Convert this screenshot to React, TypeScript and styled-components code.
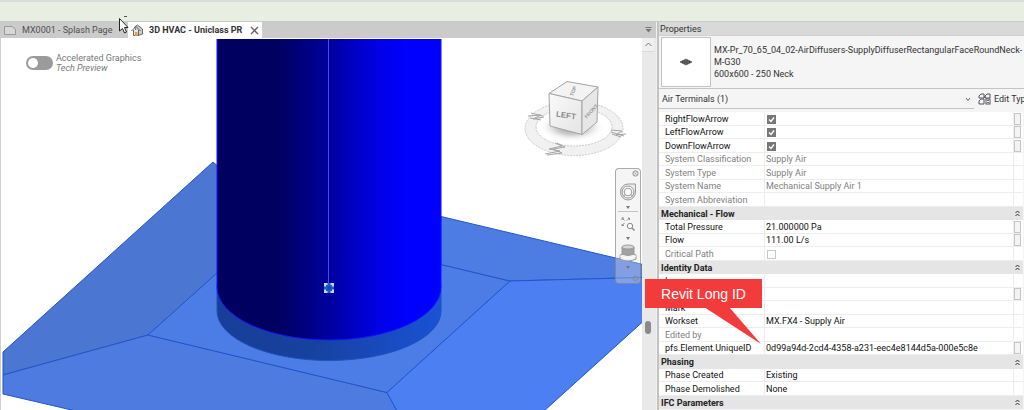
import React from "react";
import styled, { createGlobalStyle } from "styled-components";

const GlobalStyle = createGlobalStyle`
  * { box-sizing: border-box; }
  body {
    margin: 0;
    background: #fff;
    font-family: Roboto, "Open Sans", sans-serif;
    font-size: 9px;
    color: #111;
  }
  button, input, select { font: inherit; color: inherit; margin: 0; }
  button { padding: 0; border: 0; background: none; cursor: pointer; }
  svg { flex: none; }
`;

const Window = styled.div`
  display: flex;
  flex-direction: column;
  height: 100vh;
  min-height: 400px;
  overflow: hidden;
`;

const OptionsBar = styled.header`
  flex: none;
  height: 22px;
  background: #e9eee2;
  border-top: 2px solid #dbdcdd;
  border-bottom: 1px solid #c9cbc6;
`;

const Workspace = styled.main`
  flex: 1;
  min-height: 0;
  display: grid;
  grid-template-columns: minmax(0, 1fr) 367px;
`;

const DocumentArea = styled.section`
  display: flex;
  flex-direction: column;
  min-width: 0;
  min-height: 0;
  border-right: 1px solid #f0f0f0;
`;

const TabBar = styled.nav`
  flex: none;
  display: flex;
  height: 16px;
  background: #cbcbcb;
`;

const Tab = styled.div<{ $active?: boolean }>`
  display: flex;
  align-items: center;
  gap: 5px;
  padding: 0 3px;
  width: ${(p) => (p.$active ? 134 : 128)}px;
  height: 16px;
  white-space: nowrap;
  background: ${(p) => (p.$active ? "#fff" : "transparent")};
  color: ${(p) => (p.$active ? "#333" : "#505050")};
  font-weight: ${(p) => (p.$active ? 700 : 400)};
`;

const TabLabel = styled.button`
  flex: 1;
  line-height: 14px;
  text-align: left;
`;

const IconButton = styled.button`
  display: flex;
  align-items: center;
  justify-content: center;
`;

const TabMenu = styled(IconButton)`
  margin-left: auto;
  width: 16px;
`;

const ViewRow = styled.div`
  flex: 1;
  display: flex;
  min-height: 0;
`;

const Canvas = styled.div`
  position: relative;
  flex: 1;
  min-width: 0;
  background: #fff;
  overflow: hidden;
  border-left: 1px solid #cfcfcf;
`;

const Model = styled.svg`
  display: block;
  width: 100%;
  height: 100%;
`;

const GraphicsToggle = styled.label`
  position: absolute;
  left: 25px;
  top: 15px;
  display: flex;
  align-items: center;
  gap: 3px;
  color: #777;
  line-height: 10px;
`;

const Switch = styled.input`
  appearance: none;
  width: 27px;
  height: 14px;
  border-radius: 7px;
  background: #9b9b9b;
  &::before {
    content: "";
    display: block;
    width: 10px;
    height: 10px;
    margin: 2px;
    border-radius: 5px;
    background: #fff;
  }
`;

const ToggleText = styled.span`
  display: flex;
  flex-direction: column;
`;

const ViewCube = styled.svg`
  position: absolute;
  right: 14px;
  top: 38px;
`;

const NavBar = styled.div`
  position: absolute;
  right: 1px;
  top: 130px;
  width: 26px;
  height: 116px;
  display: flex;
  flex-direction: column;
  align-items: center;
  border: 1px solid rgba(120, 120, 120, 0.6);
  border-radius: 4px;
  background: rgba(225, 225, 225, 0.35);
`;

const NavButton = styled(IconButton)<{ $h: number }>`
  flex: none;
  width: 22px;
  height: ${(p) => p.$h}px;
`;

const NavDot = styled(IconButton)`
  flex: none;
  align-self: flex-end;
  width: 9px;
  height: 9px;
`;

const NavFootDot = styled(NavDot)`
  margin-top: auto;
`;

const NavRule = styled.hr`
  width: 20px;
  margin: 1px 0 0;
  border: 0;
  border-top: 1px solid #c4c4c4;
`;

const ScrollBar = styled.div`
  flex: none;
  width: 14px;
  padding-right: 2px;
  display: flex;
  flex-direction: column;
  align-items: center;
  background: #e9e9e9;
`;

const ScrollUp = styled(IconButton)`
  flex: none;
  align-self: stretch;
  height: 14px;
  background: #f0f0f0;
  border-bottom: 1px solid #d8d8d8;
`;

const ScrollGap = styled.div<{ $grow: number }>`
  flex: ${(p) => p.$grow} 0 0;
`;

const ScrollThumb = styled.div`
  flex: none;
  width: 6px;
  height: 13px;
  border-radius: 3px;
  background: #8a8a8a;
`;

const Panel = styled.aside`
  position: relative;
  display: flex;
  flex-direction: column;
  min-height: 0;
  background: #f5f5f5;
  border-left: 2px solid #c2c2c2;
`;

const PanelTitle = styled.h2`
  flex: none;
  margin: 0;
  height: 14px;
  padding-left: 1px;
  background: #d9d9d9;
  border-bottom: 1px solid #cfcfcf;
  font-size: 9px;
  font-weight: 400;
  line-height: 14px;
  color: #333;
`;

const TypeSelector = styled.button`
  flex: none;
  display: flex;
  align-items: center;
  gap: 3px;
  height: 53px;
  padding: 1px 2px;
  border-bottom: 1px solid #c4c4c4;
  text-align: left;
  line-height: 12px;
  color: #333;
`;

const Thumbnail = styled.span`
  flex: none;
  display: flex;
  align-items: center;
  justify-content: center;
  width: 50px;
  height: 50px;
  background: #fff;
  border: 1px solid #c4c4c4;
`;

const TypeName = styled.span`
  display: flex;
  flex-direction: column;
  white-space: nowrap;
`;

const FilterRow = styled.div`
  flex: none;
  display: flex;
  height: 20px;
  margin-bottom: 3px;
  overflow: hidden;
  color: #333;
`;

const FilterField = styled.div`
  position: relative;
  flex: none;
  width: 315px;
  border-bottom: 1px solid #c4c4c4;
  svg {
    position: absolute;
    right: 3px;
    top: 8px;
    pointer-events: none;
  }
`;

const FilterSelect = styled.select`
  appearance: none;
  width: 100%;
  height: 19px;
  padding: 0 3px;
  border: 0;
  background: transparent;
`;

const EditType = styled.button`
  flex: none;
  display: flex;
  align-items: center;
  gap: 3px;
  padding-left: 4px;
  white-space: nowrap;
`;

const TableWrap = styled.div`
  flex: 1;
  min-height: 0;
  overflow: hidden;
  margin-right: 1px;
`;

const Table = styled.table`
  width: 100%;
  table-layout: fixed;
  border-collapse: separate;
  border-spacing: 0;
  background: #fff;
`;

const LabelCol = styled.col`
  width: 106px;
`;

const ButtonCol = styled.col`
  width: 9px;
`;

const Row = styled.tr<{ $muted?: boolean }>`
  height: 14px;
  color: ${(p) => (p.$muted ? "#808080" : "#111")};
  &:nth-child(even) {
    height: 13px;
  }
`;

const cell = `
  padding: 0;
  line-height: 12px;
  font-weight: 400;
  text-align: left;
  vertical-align: middle;
  white-space: nowrap;
  overflow: hidden;
`;

const NameCell = styled.th`
  ${cell}
  padding-left: 6px;
  border-bottom: 1px solid #ededed;
  border-right: 1px solid #ededed;
`;

const ValueCell = styled.td`
  ${cell}
  padding-left: 1px;
  border-bottom: 1px solid #ededed;
  border-right: 1px solid #ededed;
`;

const ButtonCell = styled.td`
  ${cell}
  border-bottom: 1px solid #ededed;
`;

const GroupCell = styled.th`
  ${cell}
  padding-left: 2px;
  background: #e5e5e5;
  color: #222;
  font-weight: 700;
`;

const GroupToggleCell = styled.td`
  ${cell}
  background: #e5e5e5;
`;

const GroupToggle = styled(IconButton)`
  width: 6px;
  height: 8px;
`;

const RowButton = styled.button`
  display: block;
  width: 7px;
  height: 12px;
  border: 1px solid #c6c6c6;
  background: #f3f3f3;
`;

const Check = styled.input`
  appearance: none;
  display: block;
  width: 9px;
  height: 9px;
  margin: 1px 0 0 1px;
  border: 1px solid #c8c8c8;
  background: #fff;
  &:checked {
    border-color: #777;
    background: #777;
  }
`;

const CheckBox = styled.span`
  display: grid;
  width: 10px;
  > * { grid-area: 1 / 1; }
  svg { pointer-events: none; margin: 1px 0 0 1px; z-index: 1; }
`;

const Callout = styled.div`
  position: absolute;
  left: -14px;
  top: 257px;
  width: 117px;
  height: 29px;
  display: flex;
  align-items: center;
  justify-content: center;
  background: #f43b3b;
  color: #fff;
  font-family: "Liberation Sans", Arial, sans-serif;
  font-size: 14px;
`;

const CalloutTail = styled.svg`
  position: absolute;
  left: 59px;
  top: 28px;
`;

const Cursor = styled.svg`
  position: absolute;
  left: 117px;
  top: 15px;
`;

type Prop = {
  name: string;
  value?: string;
  muted?: boolean;
  checked?: boolean;
  button?: boolean;
};
type Entry = Prop | { group: string };

const entries: Entry[] = [
  { name: "RightFlowArrow", checked: true, button: true },
  { name: "LeftFlowArrow", checked: true, button: true },
  { name: "DownFlowArrow", checked: true, button: true },
  { name: "System Classification", value: "Supply Air", muted: true },
  { name: "System Type", value: "Supply Air", muted: true },
  { name: "System Name", value: "Mechanical Supply Air 1", muted: true },
  { name: "System Abbreviation", muted: true },
  { group: "Mechanical - Flow" },
  { name: "Total Pressure", value: "21.000000 Pa", button: true },
  { name: "Flow", value: "111.00 L/s", button: true },
  { name: "Critical Path", checked: false, muted: true },
  { group: "Identity Data" },
  { name: "Image" },
  { name: "Comments", button: true },
  { name: "Mark" },
  { name: "Workset", value: "MX.FX4 - Supply Air" },
  { name: "Edited by", muted: true },
  { name: "pfs.Element.UniqueID", value: "0d99a94d-2cd4-4358-a231-eec4e8144d5a-000e5c8e", button: true },
  { group: "Phasing" },
  { name: "Phase Created", value: "Existing" },
  { name: "Phase Demolished", value: "None" },
  { group: "IFC Parameters" },
];

function DuctModel() {
  return (
    <Model viewBox="1 38 641 372" preserveAspectRatio="xMidYMin slice" role="img" aria-label="3D view of an air diffuser">
      <defs>
        <linearGradient id="duct">
          <stop offset="0" stopColor="#000060" />
          <stop offset="0.27" stopColor="#000060" />
          <stop offset="0.4" stopColor="#000082" />
          <stop offset="0.5" stopColor="#00009e" />
          <stop offset="0.62" stopColor="#0000c6" />
          <stop offset="0.75" stopColor="#0000ec" />
          <stop offset="0.85" stopColor="#0000ff" />
        </linearGradient>
        <linearGradient id="collar">
          <stop offset="0" stopColor="#173f98" />
          <stop offset="0.4" stopColor="#17419e" />
          <stop offset="1" stopColor="#1a52d6" />
        </linearGradient>
      </defs>
      <g stroke="#2355cb" strokeWidth="1" strokeLinejoin="round">
        <path d="M3 352 213 162 220 168V271L148 335 3 375Z" fill="#4b76d2" />
        <path d="M3 375 148 335 387 392.500 397 411H76L3 394Z" fill="#4d7be0" />
        <path d="M148 335 218 272 441 264.500 510 281 387 392.500Z" fill="#4c7de6" />
        <path d="M441 216.500 643 264.500V277.500L510 281 441 264.500Z" fill="#4d7ce2" />
        <path d="M510 281 643 277.500V321.500L544 411H397L387 392.500Z" fill="#4c80f2" />
      </g>
      <path d="M217 285V311A112 49.500 0 0 0 441 311V285Z" fill="url(#collar)" stroke="#2050bd" />
      <path d="M217 38V287A112 53 0 0 0 441 287V38Z" fill="url(#duct)" />
      <path d="M217 38V287A112 53 0 0 0 441 287V38" fill="none" stroke="#1414ff" />
      <path d="M328.500 38V283" stroke="#4d4de0" />
      <g fill="none">
        <rect x="324" y="283" width="10" height="10" fill="#1c5cc0" />
        <path
          d="M327.500 284H325V286.500M330.500 284H333V286.500M327.500 292H325V289.500M330.500 292H333V289.500"
          stroke="#b9dcf5"
          strokeWidth="2"
        />
        <circle cx="329" cy="288" r="2" fill="#0a4cc0" />
      </g>
      <path d="M0 38H642V39H0Z" fill="#fff" />
    </Model>
  );
}

function CubeDrawing() {
  return (
    <ViewCube width="106" height="84" viewBox="522 76 106 84" aria-label="View cube">
      <defs>
        <linearGradient id="face" x1="0" y1="0" x2="1" y2="1">
          <stop offset="0" stopColor="#fafafa" />
          <stop offset="1" stopColor="#e4e4e4" />
        </linearGradient>
        <radialGradient id="shade">
          <stop offset="0" stopColor="#999" />
          <stop offset="0.5" stopColor="#ccc" />
          <stop offset="1" stopColor="#fff" stopOpacity="0" />
        </radialGradient>
      </defs>
      <path
        d="M525 128.500a49 27 0 1 0 98 0a49 27 0 1 0-98 0ZM536 127a38 19 0 1 0 76 0a38 19 0 1 0-76 0Z"
        fill="#f1f1f1"
        fillRule="evenodd"
        stroke="#cccccc"
        strokeDasharray="2 1"
      />
      <ellipse cx="572" cy="127" rx="33" ry="15" fill="url(#shade)" />
      <g stroke="#a4a4a4" strokeLinejoin="round">
        <path d="M549 93.500 567 81.500 598 87 582 101Z" fill="#f3f3f3" />
        <path d="M549 93.500 582 101V134.500L550 126Z" fill="url(#face)" />
        <path d="M582 101 598 87 597 122 582 134.500Z" fill="#e6e6e6" />
      </g>
      <g fontFamily="Liberation Sans, sans-serif" fill="#999" textAnchor="middle">
        <text x="566" y="118" fontSize="8" fontWeight="700" fill="#8c8c8c" transform="rotate(8 566 115)">LEFT</text>
        <text x="591" y="113" fontSize="5" fontWeight="700" transform="rotate(-48 591 111)">FRONT</text>
        <text x="573" y="93" fontSize="5" fontWeight="700" transform="rotate(-65 573 91)">TOP</text>
      </g>
      <g fill="none" stroke="#a6a6a6" strokeWidth="1" strokeLinejoin="round">
        <path d="M545 154 560 151 549 149 562 146 555 143M547 155 562 153 553 149 565 147 557 143" />
        <path d="M528 116 541 115 533 119 544 117M531 113 543 116M530 118 541 120" />
        <path d="M611 132 624 136M611 130 622 131 616 135 626 134M612 134 621 137" />
      </g>
    </ViewCube>
  );
}

const SmallCircle = () => (
  <svg width="7" height="7" viewBox="0 0 7 7" fill="none" stroke="#8a8a8a">
    <circle cx="3.500" cy="3.500" r="2.600" />
    <path d="M2.500 2.500 4.500 4.500M4.500 2.500 2.500 4.500" strokeWidth="0.800" />
  </svg>
);

const DownArrow = () => (
  <svg width="4" height="3" viewBox="0 0 4 3">
    <path d="M0 0H4L2 3Z" fill="#777" />
  </svg>
);

function Navigation() {
  return (
    <NavBar>
      <NavDot aria-label="Close navigation bar"><SmallCircle /></NavDot>
      <NavButton $h={27} aria-label="Steering wheel">
        <svg width="18" height="18" viewBox="0 0 18 18" fill="none" stroke="#9a9a9a">
          <path d="M9 1H16.500V9A7.500 8 0 1 1 9 1Z" fill="#ececec" />
          <circle cx="9" cy="9" r="6" fill="#fafafa" />
          <circle cx="9" cy="9" r="3.800" />
          <path d="M6 11.500 4.500 13.500M12 11.500 13.500 13.500" />
        </svg>
      </NavButton>
      <NavButton $h={5} aria-label="Wheel options"><DownArrow /></NavButton>
      <NavRule />
      <NavButton $h={24} aria-label="Zoom">
        <svg width="14" height="14" viewBox="0 0 14 14" fill="none" stroke="#8c8c8c">
          <path d="M1 3V1H3M1 1 3.500 3.500M7 1H8.500V3M8.500 1 6 3.500M1 7V8.500H3M1 8.500 3.500 6" strokeWidth="1" />
          <circle cx="9" cy="9" r="2.700" fill="#f8f8f8" />
          <path d="M11 11 13.500 13.500" strokeWidth="1.500" />
        </svg>
      </NavButton>
      <NavButton $h={5} aria-label="Zoom options"><DownArrow /></NavButton>
      <NavButton $h={24} aria-label="3D navigation">
        <svg width="18" height="18" viewBox="0 0 18 18" stroke="#9a9a9a">
          <path d="M1 11Q9 7 17 11V15Q9 19 1 15Z" fill="#f0f0f0" />
          <path d="M3 3V10Q9 13 15 10V3Z" fill="#a2a2a2" />
          <ellipse cx="9" cy="3" rx="6" ry="2" fill="#d6d6d6" />
          <path d="M1 12Q9 16 17 12" fill="none" stroke="#fff" />
        </svg>
      </NavButton>
      <NavButton $h={5} aria-label="3D options"><DownArrow /></NavButton>
      <NavFootDot aria-label="Customize navigation bar"><SmallCircle /></NavFootDot>
    </NavBar>
  );
}

function PropertyRow({ p }: { p: Prop }) {
  return (
    <Row $muted={p.muted}>
      <NameCell scope="row">{p.name}</NameCell>
      <ValueCell>
        {p.checked === undefined ? (
          p.value
        ) : (
          <CheckBox>
            <Check type="checkbox" aria-label={p.name} defaultChecked={p.checked} disabled={p.muted} />
            {p.checked && (
              <svg width="9" height="9" viewBox="0 0 9 9" fill="none" stroke="#fff" strokeWidth="1.300">
                <path d="M2 4.500 4 6.500 7 2.500" />
              </svg>
            )}
          </CheckBox>
        )}
      </ValueCell>
      <ButtonCell>{p.button && <RowButton aria-label={`Associate ${p.name}`} />}</ButtonCell>
    </Row>
  );
}

function PropertiesPanel() {
  return (
    <Panel>
      <PanelTitle>Properties</PanelTitle>
      <TypeSelector>
        <Thumbnail>
          <svg width="14" height="10" viewBox="0 0 14 10">
            <path d="M1 5 7 2 13 5 7 8Z" fill="#333" stroke="#666" strokeWidth="0.800" />
            <path d="M4 5 7 3.500 10 5 7 6.500ZM7 2V8" fill="none" stroke="#888" strokeWidth="0.600" />
          </svg>
        </Thumbnail>
        <TypeName>
          <span>MX-Pr_70_65_04_02-AirDiffusers-SupplyDiffuserRectangularFaceRoundNeck-</span>
          <span>M-G30</span>
          <span>600x600 - 250 Neck</span>
        </TypeName>
      </TypeSelector>
      <FilterRow>
        <FilterField>
          <FilterSelect aria-label="Element filter">
            <option>Air Terminals (1)</option>
          </FilterSelect>
          <svg width="6" height="5" viewBox="0 0 6 5" fill="none" stroke="#666">
            <path d="M1 1 3 3.500 5 1" />
          </svg>
        </FilterField>
        <EditType>
          <svg width="13" height="12" viewBox="0 0 13 12" fill="none" stroke="#555">
            <path d="M1 3 3 1H6V5H1ZM7 3 9 1H12V5H7ZM1 8 3 6H6V11H1ZM7 3V5" />
            <rect x="8" y="6" width="4" height="5" fill="#fff" />
            <path d="M9 7.500H11M9 9.500H11" stroke="#3a76b8" />
          </svg>
          Edit Type
        </EditType>
      </FilterRow>
      <TableWrap>
        <Table>
          <colgroup>
            <LabelCol />
            <col />
            <ButtonCol />
          </colgroup>
          <tbody>
            {entries.map((e) =>
              "group" in e ? (
                <Row key={e.group}>
                  <GroupCell colSpan={2} scope="rowgroup">{e.group}</GroupCell>
                  <GroupToggleCell>
                    <GroupToggle aria-label={`Collapse ${e.group}`}>
                      <svg width="5" height="7" viewBox="0 0 5 7" fill="none" stroke="#333">
                        <path d="M0.500 3 2.500 1 4.500 3M0.500 6 2.500 4 4.500 6" />
                      </svg>
                    </GroupToggle>
                  </GroupToggleCell>
                </Row>
              ) : (
                <PropertyRow key={e.name} p={e} />
              )
            )}
          </tbody>
        </Table>
      </TableWrap>
      <Callout>
        Revit Long ID
        <CalloutTail width="58" height="38" viewBox="0 0 58 38">
          <path d="M0 0H25L57 37Z" fill="#f43b3b" />
        </CalloutTail>
      </Callout>
    </Panel>
  );
}

export default function App() {
  return (
    <Window>
      <GlobalStyle />
      <OptionsBar />
      <Workspace>
        <DocumentArea>
          <TabBar>
            <Tab>
              <svg width="14" height="11" viewBox="0 0 14 11">
                <path d="M1.500 1.500H9L12.500 4.500V9.500H1.500Z" fill="#d8d8d8" stroke="#999" />
              </svg>
              <TabLabel>MX0001 - Splash Page</TabLabel>
            </Tab>
            <Tab $active>
              <svg width="13" height="13" viewBox="0 0 13 13" stroke="#666">
                <path d="M3.500 3 6.500 1 11.500 5V10L7 11.500Z" fill="#ccc" />
                <path d="M2.500 6V11.500H7.500V6" fill="#e8e8e8" />
                <path d="M0.500 7 5 2.500 9.500 7" fill="none" />
                <rect x="4" y="8" width="2.500" height="4" fill="#e0a030" stroke="none" />
              </svg>
              <TabLabel>3D HVAC - Uniclass PR</TabLabel>
              <IconButton aria-label="Close tab">
                <svg width="9" height="9" viewBox="0 0 9 9" stroke="#666" strokeWidth="1.400">
                  <path d="M1 1 8 8M8 1 1 8" />
                </svg>
              </IconButton>
            </Tab>
            <TabMenu aria-label="Open views">
              <svg width="7" height="6" viewBox="0 0 7 6">
                <path d="M0.500 0H6.500V1H0.500ZM0.500 2H6.500L3.500 5.500Z" fill="#777" />
              </svg>
            </TabMenu>
          </TabBar>
          <ViewRow>
            <Canvas>
              <DuctModel />
              <GraphicsToggle>
                <Switch type="checkbox" role="switch" />
                <ToggleText>
                  <span>Accelerated Graphics</span>
                  <em>Tech Preview</em>
                </ToggleText>
              </GraphicsToggle>
              <CubeDrawing />
              <Navigation />
            </Canvas>
            <ScrollBar>
              <ScrollUp aria-label="Scroll up">
                <svg width="7" height="5" viewBox="0 0 7 5" fill="none" stroke="#777">
                  <path d="M0.500 4 3.500 1 6.500 4" />
                </svg>
              </ScrollUp>
              <ScrollGap $grow={270} />
              <ScrollThumb />
              <ScrollGap $grow={76} />
            </ScrollBar>
          </ViewRow>
        </DocumentArea>
        <PropertiesPanel />
      </Workspace>
      <Cursor width="14" height="20" viewBox="0 0 14 20">
        <path d="M7 1.500H10" stroke="#555" />
        <path d="M2.500 3.500V16L5.500 13.500 7.500 18 9.500 17 7.500 12.500H11Z" fill="#fff" stroke="#222" />
      </Cursor>
    </Window>
  );
}
